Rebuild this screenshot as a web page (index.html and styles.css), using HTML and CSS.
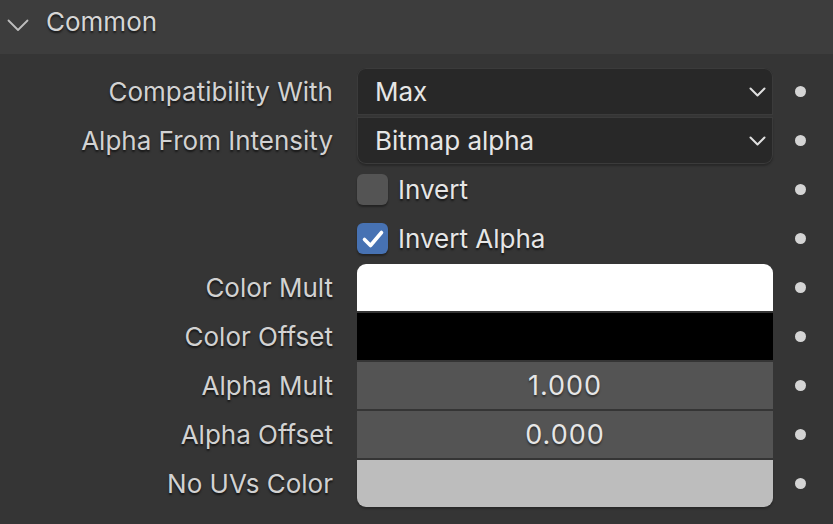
FILE: index.html
```html
<!DOCTYPE html>
<html>
<head>
<meta charset="utf-8">
<link rel="stylesheet" href="styles.css">
</head>
<body>
<div class="panel">
  <div class="header">
    <svg class="hchev" width="22" height="13" viewBox="0 0 22 13"><path d="M1.5 1.5 L11 11 L20.5 1.5" fill="none" stroke="#bdbdbd" stroke-width="1.8" stroke-linecap="round" stroke-linejoin="round"/></svg>
    <span class="htitle">Common</span>
  </div>
  <div class="rows">
    <div class="label">Compatibility With</div>
    <div class="field drop first">Max<svg class="dchev" width="17" height="10" viewBox="0 0 17 10"><path d="M1.5 1.5 L8.5 8.5 L15.5 1.5" fill="none" stroke="#e0e0e0" stroke-width="2" stroke-linecap="round" stroke-linejoin="round"/></svg></div>
    <div class="dotcell"><span class="dot"></span></div>

    <div class="label">Alpha From Intensity</div>
    <div class="field drop last">Bitmap alpha<svg class="dchev" width="17" height="10" viewBox="0 0 17 10"><path d="M1.5 1.5 L8.5 8.5 L15.5 1.5" fill="none" stroke="#e0e0e0" stroke-width="2" stroke-linecap="round" stroke-linejoin="round"/></svg></div>
    <div class="dotcell"><span class="dot"></span></div>

    <div class="label"></div>
    <div class="check"><span class="box"></span>Invert</div>
    <div class="dotcell"><span class="dot"></span></div>

    <div class="label"></div>
    <div class="check"><span class="box on"><svg width="24" height="20" viewBox="0 0 24 20"><path d="M3.5 10.5 L9.5 16.5 L20.5 3.5" fill="none" stroke="#ffffff" stroke-width="3.6" stroke-linecap="round" stroke-linejoin="round"/></svg></span>Invert Alpha</div>
    <div class="dotcell"><span class="dot"></span></div>

    <div class="label">Color Mult</div>
    <div class="field color white first"></div>
    <div class="dotcell"><span class="dot"></span></div>

    <div class="label">Color Offset</div>
    <div class="field color black"></div>
    <div class="dotcell"><span class="dot"></span></div>

    <div class="label">Alpha Mult</div>
    <div class="field num">1.000</div>
    <div class="dotcell"><span class="dot"></span></div>

    <div class="label">Alpha Offset</div>
    <div class="field num">0.000</div>
    <div class="dotcell"><span class="dot"></span></div>

    <div class="label">No UVs Color</div>
    <div class="field color grey last"></div>
    <div class="dotcell"><span class="dot"></span></div>
  </div>
</div>
</body>
</html>
```
FILE: styles.css
```css
html, body {
  margin: 0;
  padding: 0;
  background: #353535;
}
.panel {
  width: 833px;
  height: 524px;
  background: #353535;
  font-family: Inter, "DejaVu Sans", sans-serif;
  overflow: hidden;
}
.header {
  height: 54px;
  background: #3d3d3d;
  display: flex;
  align-items: center;
  padding-left: 7px;
  box-sizing: border-box;
}
.hchev {
  margin-top: -3px;
}
.htitle {
  margin-left: 17px;
  font-size: 26px;
  color: #d6d6d6;
  text-shadow: 0 2px 2px rgba(0,0,0,0.6);
  margin-top: -12px;
}
.rows {
  padding-top: 14px;
  display: grid;
  grid-template-columns: 357px 416px 54px;
  grid-auto-rows: 47px;
  row-gap: 2px;
}
.label {
  padding-right: 24px;
  text-align: right;
  font-size: 26px;
  color: #d2d2d2;
  text-shadow: 0 2px 2px rgba(0,0,0,0.6);
  display: flex;
  align-items: center;
  justify-content: flex-end;
}
.field {
  display: flex;
  align-items: center;
  font-size: 26px;
  color: #e6e6e6;
  box-sizing: border-box;
}
.drop {
  background: #282828;
  padding-left: 18px;
  padding-right: 7px;
  justify-content: space-between;
  box-shadow: inset 0 0 0 1px #3b3b3b;
}
.first {
  border-radius: 9px 9px 0 0;
}
.last {
  border-radius: 0 0 9px 9px;
  box-shadow: 0 2px 2px rgba(0,0,0,0.25);
}
.drop.last {
  box-shadow: inset 0 0 0 1px #3b3b3b, 0 2px 2px rgba(0,0,0,0.25);
}
.num {
  background: #545454;
  justify-content: center;
  font-size: 27px;
  letter-spacing: 1px;
  text-shadow: 0 2px 2px rgba(0,0,0,0.45);
}
.color.white { background: #ffffff; }
.color.black { background: #000000; }
.color.grey { background: #bdbdbd; }
.check {
  display: flex;
  align-items: center;
  font-size: 26px;
  color: #e6e6e6;
  text-shadow: 0 2px 2px rgba(0,0,0,0.6);
}
.box {
  width: 31px;
  height: 31px;
  border-radius: 6px;
  background: #545454;
  box-shadow: 0 2px 2px rgba(0,0,0,0.35);
  margin-right: 10px;
  display: flex;
  align-items: center;
  justify-content: center;
}
.box.on {
  background: #4772b3;
}
.dotcell {
  display: flex;
  align-items: center;
  justify-content: center;
}
.dot {
  width: 11px;
  height: 11px;
  border-radius: 50%;
  background: #d4d4d4;
}
```
